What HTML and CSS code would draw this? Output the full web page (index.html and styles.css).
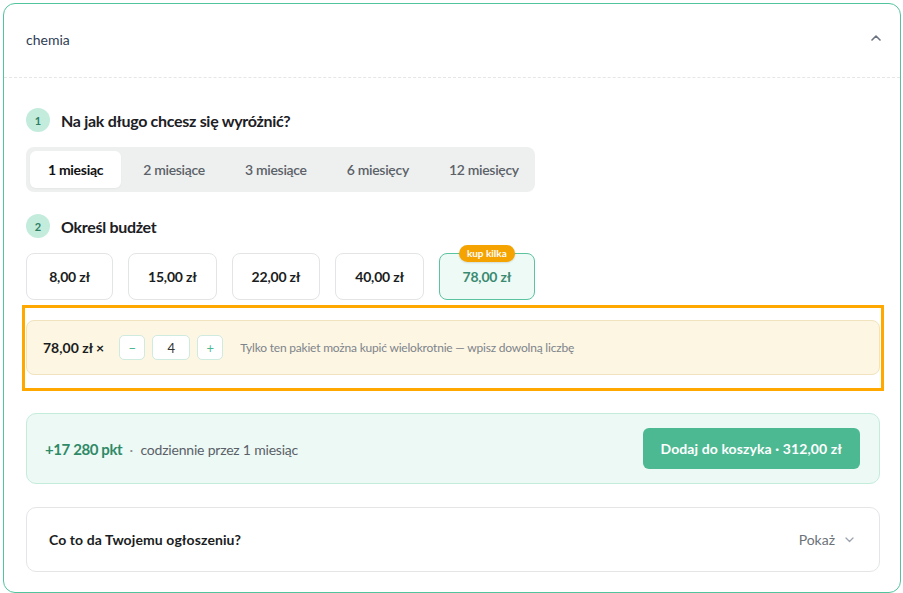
FILE: index.html
```html
<!DOCTYPE html>
<html lang="pl">
<head>
  <meta charset="UTF-8" />
  <meta name="viewport" content="width=device-width, initial-scale=1.0" />
  <title>Wyróżnienie ogłoszenia</title>
  <link rel="stylesheet" href="styles.css">
</head>
<body>
  <div class="card">
    <div class="card-head">
      <span class="card-title">chemia</span>
      <svg class="chevron" width="10" height="6" viewBox="0 0 10 6"><path d="M1 5 L5 1 L9 5" fill="none" stroke="#6b7280" stroke-width="1.6" stroke-linecap="round" stroke-linejoin="round"/></svg>
    </div>

    <div class="card-body">
      <div class="step">
        <span class="step-num">1</span>
        <h3>Na jak długo chcesz się wyróżnić?</h3>
      </div>
      <div class="tabs">
        <button class="tab active">1 miesiąc</button>
        <button class="tab">2 miesiące</button>
        <button class="tab">3 miesiące</button>
        <button class="tab">6 miesięcy</button>
        <button class="tab">12 miesięcy</button>
      </div>

      <div class="step">
        <span class="step-num">2</span>
        <h3>Określ budżet</h3>
      </div>
      <div class="prices">
        <button class="price">8,00 zł</button>
        <button class="price">15,00 zł</button>
        <button class="price">22,00 zł</button>
        <button class="price">40,00 zł</button>
        <button class="price selected"><span class="badge">kup kilka</span>78,00 zł</button>
      </div>

      <div class="highlight">
        <div class="multi">
          <b class="multi-price">78,00 zł ×</b>
          <button class="qty-btn">−</button>
          <input class="qty" type="text" value="4" />
          <button class="qty-btn">+</button>
          <span class="multi-hint">Tylko ten pakiet można kupić wielokrotnie — wpisz dowolną liczbę</span>
        </div>
      </div>

      <div class="summary">
        <div class="summary-text">
          <b class="pts">+17 280 pkt</b>
          <span class="dot">·</span>
          <span>codziennie przez 1 miesiąc</span>
        </div>
        <button class="add-btn">Dodaj do koszyka · 312,00 zł</button>
      </div>

      <div class="info">
        <span class="info-title">Co to da Twojemu ogłoszeniu?</span>
        <span class="info-toggle">Pokaż
          <svg width="9" height="6" viewBox="0 0 9 6"><path d="M1 1 L4.5 4.5 L8 1" fill="none" stroke="#9ca3af" stroke-width="1.3" stroke-linecap="round" stroke-linejoin="round"/></svg>
        </span>
      </div>
    </div>
  </div>
</body>
</html>
```

FILE: styles.css
```css
body {
  margin: 0;
  padding: 3px 2px 0 3px;
  background-color: #fff;
  font-family: 'Lato', sans-serif;
  color: #1f2328;
}

button,
input {
  font-family: inherit;
}

.card {
  border: 1px solid #52c49d;
  border-radius: 12px;
  height: 590px;
  box-sizing: border-box;
}

.card-head {
  height: 73px;
  display: flex;
  align-items: center;
  justify-content: space-between;
  padding: 0 19px 0 22px;
  border-bottom: 1px dashed #e4e6e8;
}

.card-title {
  font-size: 14px;
  color: #2f3d55;
  margin-top: -2px;
}

.chevron {
  margin-top: -6px;
}

.card-body {
  padding: 30px 20px 0 22px;
}

.step {
  display: flex;
  align-items: center;
  gap: 11px;
}

.step h3 {
  margin: 0;
  font-size: 16px;
  font-weight: 700;
  letter-spacing: -0.3px;
  color: #1c2024;
}

.step-num {
  width: 24px;
  height: 24px;
  border-radius: 50%;
  background-color: #c3ecdd;
  color: #2f7d62;
  font-size: 11px;
  font-weight: 700;
  display: flex;
  align-items: center;
  justify-content: center;
}

.tabs {
  display: inline-flex;
  gap: 4px;
  margin: 15px 0 22px;
  padding: 4px;
  background-color: #eef0ef;
  border-radius: 8px;
  width: 509px;
  box-sizing: border-box;
}

.tab {
  border: none;
  background: none;
  height: 37px;
  padding: 0 18px;
  font-size: 14px;
  font-weight: 600;
  letter-spacing: -0.3px;
  color: #5b6168;
  border-radius: 6px;
  flex: 0 0 auto;
}

.tab.active {
  background-color: #fff;
  color: #111;
  font-weight: 700;
  box-shadow: 0 1px 2px rgba(0, 0, 0, 0.04);
}

.prices {
  display: flex;
  gap: 15px;
  margin-top: 15px;
}

.price {
  position: relative;
  height: 47px;
  min-width: 87px;
  padding: 0 19px;
  background-color: #fff;
  border: 1px solid #e2e4e6;
  border-radius: 8px;
  font-size: 14px;
  font-weight: 700;
  letter-spacing: -0.2px;
  color: #1a1d21;
}

.price.selected {
  border-color: #5cc39f;
  background-color: #eefaf5;
  color: #3a8a72;
  min-width: 96px;
}

.badge {
  position: absolute;
  top: -9px;
  left: 50%;
  transform: translateX(-50%);
  background-color: #f5a300;
  color: #fff;
  font-size: 10px;
  font-weight: 700;
  letter-spacing: 0;
  padding: 2px 8px 3px;
  border-radius: 9px;
  white-space: nowrap;
  box-shadow: 0 1px 2px rgba(0, 0, 0, 0.12);
}

.highlight {
  margin-top: 9px;
  padding: 11px 0 12px;
  outline: 3px solid #ffa800;
  outline-offset: 1px;
}

.multi {
  display: flex;
  align-items: center;
  height: 55px;
  padding: 0 16px;
  background-color: #fdf6e3;
  border: 1px solid #f0e3bd;
  border-radius: 8px;
  box-sizing: border-box;
}

.multi-price {
  font-size: 14px;
  color: #1a1d21;
  margin-right: 15px;
}

.qty-btn,
.qty {
  height: 25px;
  box-sizing: border-box;
  border: 1px solid #cfeadf;
  border-radius: 5px;
  background-color: #fff;
}

.qty-btn {
  width: 26px;
  padding: 0;
  color: #4cb993;
  font-size: 13px;
}

.qty {
  width: 38px;
  margin: 0 7px;
  text-align: center;
  font-size: 13px;
  color: #333;
}

.multi-hint {
  margin-left: 17px;
  font-size: 12px;
  letter-spacing: -0.2px;
  color: #7d848b;
}

.summary {
  margin-top: 26px;
  height: 71px;
  box-sizing: border-box;
  display: flex;
  align-items: center;
  justify-content: space-between;
  padding: 0 19px 0 18px;
  background-color: #edf9f4;
  border: 1px solid #c4ecdb;
  border-radius: 10px;
}

.summary-text {
  font-size: 14px;
  letter-spacing: -0.2px;
  color: #5a6068;
}

.pts {
  color: #2e8a67;
  font-size: 15px;
  letter-spacing: -0.4px;
}

.dot {
  margin: 0 4px;
  color: #8a9096;
}

.add-btn {
  height: 41px;
  padding: 0 18px;
  border: none;
  border-radius: 6px;
  background-color: #4cb993;
  color: #fff;
  font-size: 14px;
  font-weight: 700;
  letter-spacing: 0.1px;
}

.info {
  margin-top: 23px;
  height: 65px;
  box-sizing: border-box;
  display: flex;
  align-items: center;
  justify-content: space-between;
  padding: 0 25px 0 22px;
  border: 1px solid #e3e5e7;
  border-radius: 10px;
}

.info-title {
  font-size: 14px;
  font-weight: 700;
  letter-spacing: 0.1px;
  color: #1a1d21;
}

.info-toggle {
  display: flex;
  align-items: center;
  gap: 10px;
  font-size: 14px;
  color: #6b7178;
}
```
